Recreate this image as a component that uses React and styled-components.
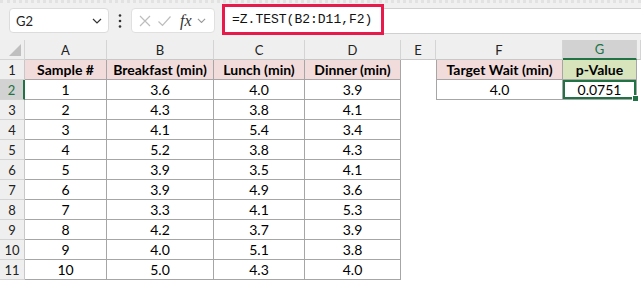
import React from 'react';
import styled, { createGlobalStyle } from 'styled-components';

const GlobalStyle = createGlobalStyle`
  html, body {
    margin: 0;
    padding: 0;
    background: #ffffff;
  }
  * {
    box-sizing: border-box;
  }
`;

const Page = styled.div`
  width: 641px;
  height: 282px;
  overflow: hidden;
  background: #ffffff;
  font-family: Lato, 'Liberation Sans', sans-serif;
`;

const TopBar = styled.div`
  height: 40px;
  background: #f0f0f0;
  border-top: 3px dotted #e2e2e2;
  display: flex;
  align-items: flex-start;
  padding-top: 5px;
`;

const NameBox = styled.div`
  margin-left: 9px;
  width: 100px;
  height: 25px;
  background: #ffffff;
  border: 1px solid #dcdcdc;
  border-radius: 4px;
  display: flex;
  align-items: center;
  justify-content: space-between;
  padding: 0 6px 0 6px;
  font-size: 13px;
  color: #222;
`;

const Dots = styled.div`
  width: 22px;
  height: 25px;
  display: flex;
  align-items: center;
  justify-content: center;
`;

const FuncBox = styled.div`
  width: 84px;
  height: 25px;
  background: #ffffff;
  border: 1px solid #e0e0e0;
  border-radius: 4px;
  display: flex;
  align-items: center;
  gap: 5px;
  padding: 0 4px 0 6px;
`;

const Fx = styled.span`
  font-family: 'Liberation Serif', serif;
  font-style: italic;
  font-size: 16px;
  color: #333;
  margin-left: 3px;
`;

const FormulaArea = styled.div`
  flex: 1;
  margin-left: 7px;
  display: flex;
  height: 31px;
  margin-top: -4px;
`;

const FormulaHighlight = styled.div`
  width: 162px;
  height: 31px;
  border: 3px solid #e8194b;
  background: #ffffff;
  display: flex;
  align-items: center;
  padding-left: 7px;
  font-family: 'Liberation Mono', monospace;
  font-size: 13px;
  color: #111;
`;

const FormulaRest = styled.div`
  flex: 1;
  margin-top: 4px;
  height: 26px;
  background: #ffffff;
  border-top: 1px solid #d0d0d0;
  border-bottom: 1px solid #d0d0d0;
`;

const Sheet = styled.div`
  display: grid;
  grid-template-columns: 25px 82px 107px 91px 96px 35px 127px 74px 4px;
  grid-auto-rows: 20px;
  font-size: 14px;
  color: #000;
`;

const Corner = styled.div`
  background: #efefef;
  border-right: 1px solid #d4d4d4;
  border-bottom: 1px solid #d4d4d4;
  position: relative;
  &::after {
    content: '';
    position: absolute;
    right: 3px;
    bottom: 3px;
    border-left: 12px solid transparent;
    border-bottom: 12px solid #bfbfbf;
  }
`;

const ColHead = styled.div`
  background: ${({ active }) => (active ? '#d2d2d2' : '#efefef')};
  color: ${({ active }) => (active ? '#217346' : '#222')};
  border-right: 1px solid #d4d4d4;
  border-bottom: ${({ active }) => (active ? '2px solid #217346' : '1px solid #c8c8c8')};
  display: flex;
  align-items: center;
  justify-content: center;
  font-size: 13px;
`;

const RowHead = styled.div`
  background: ${({ active }) => (active ? '#d2d2d2' : '#efefef')};
  color: ${({ active }) => (active ? '#217346' : '#222')};
  border-right: ${({ active }) => (active ? '2px solid #217346' : '1px solid #c8c8c8')};
  border-bottom: 1px solid #d4d4d4;
  display: flex;
  align-items: center;
  justify-content: center;
  font-size: 13px;
`;

const fills = {
  pink: '#f2dcdb',
  green: '#d8e4bc',
  none: '#ffffff',
};

const Cell = styled.div`
  position: relative;
  background: ${({ fill }) => fills[fill || 'none']};
  font-weight: ${({ bold }) => (bold ? 700 : 400)};
  border-right: ${({ bordered }) => (bordered ? '1px solid #a6a6a6' : 'none')};
  border-bottom: ${({ bordered }) => (bordered ? '1px solid #a6a6a6' : 'none')};
  border-left: ${({ leftEdge }) => (leftEdge ? '1px solid #a6a6a6' : 'none')};
  display: flex;
  align-items: center;
  justify-content: center;
  white-space: nowrap;
  ${({ selected }) =>
    selected &&
    `
    box-shadow: inset 0 0 0 2px #217346;
    &::after {
      content: '';
      position: absolute;
      right: -3px;
      bottom: -3px;
      width: 5px;
      height: 5px;
      background: #217346;
      border: 1px solid #ffffff;
      z-index: 2;
    }
  `}
`;

const Chevron = ({ color = '#333', size = 10 }) => (
  <svg width={size} height={size * 0.6} viewBox="0 0 10 6">
    <path d="M1 1 L5 5 L9 1" fill="none" stroke={color} strokeWidth="1.2" />
  </svg>
);

const CrossIcon = () => (
  <svg width="14" height="14" viewBox="0 0 14 14">
    <path d="M2 2 L12 12 M12 2 L2 12" stroke="#bdbdbd" strokeWidth="1.2" fill="none" />
  </svg>
);

const CheckIcon = () => (
  <svg width="15" height="14" viewBox="0 0 15 14">
    <path d="M1.5 7.5 L5.5 11.5 L13.5 2.5" stroke="#bdbdbd" strokeWidth="1.2" fill="none" />
  </svg>
);

const VDots = () => (
  <svg width="4" height="16" viewBox="0 0 4 16">
    <circle cx="2" cy="2.5" r="1.3" fill="#333" />
    <circle cx="2" cy="8" r="1.3" fill="#333" />
    <circle cx="2" cy="13.5" r="1.3" fill="#333" />
  </svg>
);

const columns = ['A', 'B', 'C', 'D', 'E', 'F', 'G'];

const data = [
  [1, '3.6', '4.0', '3.9'],
  [2, '4.3', '3.8', '4.1'],
  [3, '4.1', '5.4', '3.4'],
  [4, '5.2', '3.8', '4.3'],
  [5, '3.9', '3.5', '4.1'],
  [6, '3.9', '4.9', '3.6'],
  [7, '3.3', '4.1', '5.3'],
  [8, '4.2', '3.7', '3.9'],
  [9, '4.0', '5.1', '3.8'],
  [10, '5.0', '4.3', '4.0'],
];

const App = () => {
  return (
    <Page>
      <GlobalStyle />
      <TopBar>
        <NameBox>
          <span>G2</span>
          <Chevron />
        </NameBox>
        <Dots>
          <VDots />
        </Dots>
        <FuncBox>
          <CrossIcon />
          <CheckIcon />
          <Fx>fx</Fx>
          <Chevron color="#999" size={9} />
        </FuncBox>
        <FormulaArea>
          <FormulaHighlight>=Z.TEST(B2:D11,F2)</FormulaHighlight>
          <FormulaRest />
        </FormulaArea>
      </TopBar>
      <Sheet>
        <Corner />
        {columns.map((c) => (
          <ColHead key={c} active={c === 'G'}>
            {c}
          </ColHead>
        ))}
        <ColHead />

        <RowHead>1</RowHead>
        <Cell bordered fill="pink" bold>Sample #</Cell>
        <Cell bordered fill="pink" bold>Breakfast (min)</Cell>
        <Cell bordered fill="pink" bold>Lunch (min)</Cell>
        <Cell bordered fill="pink" bold>Dinner (min)</Cell>
        <Cell />
        <Cell bordered leftEdge fill="pink" bold>Target Wait (min)</Cell>
        <Cell bordered fill="green" bold>p-Value</Cell>
        <Cell />

        {data.map((row, i) => (
          <React.Fragment key={i}>
            <RowHead active={i === 0}>{i + 2}</RowHead>
            {row.map((v, j) => (
              <Cell key={j} bordered>
                {v}
              </Cell>
            ))}
            <Cell />
            {i === 0 ? (
              <>
                <Cell bordered leftEdge>4.0</Cell>
                <Cell bordered selected>0.0751</Cell>
              </>
            ) : (
              <>
                <Cell />
                <Cell />
              </>
            )}
            <Cell />
          </React.Fragment>
        ))}
      </Sheet>
    </Page>
  );
};

export default App;
